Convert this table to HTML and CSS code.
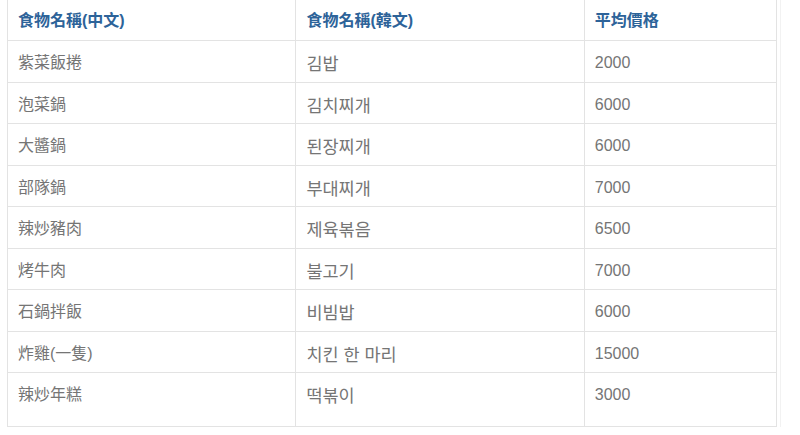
FILE: index.html
```html
<!DOCTYPE html>
<html lang="zh-Hant">
<head>
<meta charset="utf-8">
<link rel="stylesheet" href="styles.css">
</head>
<body>
<div class="wrap">
<table class="food">
  <colgroup><col class="c1"><col class="c2"><col class="c3"></colgroup>
  <thead>
    <tr><th>食物名稱(中文)</th><th>食物名稱(韓文)</th><th>平均價格</th></tr>
  </thead>
  <tbody>
    <tr><td>紫菜飯捲</td><td lang="ko">김밥</td><td>2000</td></tr>
    <tr><td>泡菜鍋</td><td lang="ko">김치찌개</td><td>6000</td></tr>
    <tr><td>大醬鍋</td><td lang="ko">된장찌개</td><td>6000</td></tr>
    <tr><td>部隊鍋</td><td lang="ko">부대찌개</td><td>7000</td></tr>
    <tr><td>辣炒豬肉</td><td lang="ko">제육볶음</td><td>6500</td></tr>
    <tr><td>烤牛肉</td><td lang="ko">불고기</td><td>7000</td></tr>
    <tr><td>石鍋拌飯</td><td lang="ko">비빔밥</td><td>6000</td></tr>
    <tr><td>炸雞(一隻)</td><td lang="ko">치킨 한 마리</td><td>15000</td></tr>
    <tr class="last"><td>辣炒年糕</td><td lang="ko">떡볶이</td><td>3000</td></tr>
  </tbody>
</table>
</div>
</body>
</html>
```

FILE: styles.css
```css
html, body {
  margin: 0;
  padding: 0;
  background: #fff;
}
body {
  font-family: "Liberation Sans", "Noto Sans CJK TC", "Noto Sans CJK KR", sans-serif;
  font-size: 16px;
  color: #757575;
}
.wrap {
  margin-left: 7px;
  width: 773px;
  border-right: 1px solid #f2f2f2;
}
.food {
  width: 770px;
  border-collapse: collapse;
  table-layout: fixed;
}
.c1, .c2 { width: 37.5%; }
.c3 { width: 25%; }
.food th, .food td {
  border: 1px solid #e3e3e3;
  padding: 12px 10px 8px;
  line-height: 20.5px;
  text-align: left;
  vertical-align: top;
}
.food th {
  border-top: none;
  color: #2d6399;
  font-weight: bold;
  padding-top: 11px;
  padding-bottom: 9px;
  line-height: 20px;
}
.food td[lang="ko"] {
  font-family: "Noto Sans CJK KR", sans-serif;
  font-size: 17.5px;
}
.food tr.last td {
  padding-bottom: 20px;
}
```
